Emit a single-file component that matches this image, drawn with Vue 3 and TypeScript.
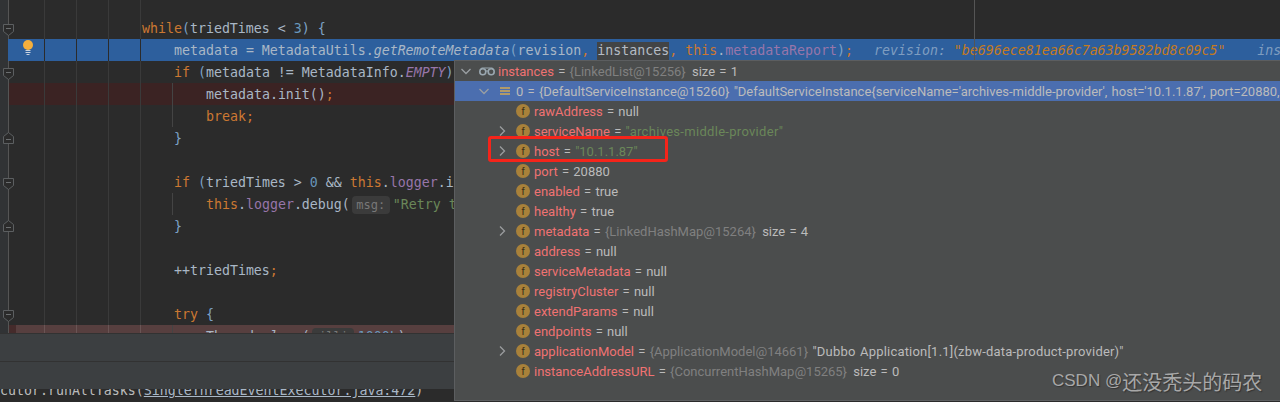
<script setup lang="ts">
type Seg = [string, string?]
interface Line { segs: Seg[]; lvl?: number; kind?: string; guide?: boolean; fold?: 'down' | 'up'; bulb?: boolean }
const lines: Line[] = [
  { segs: [], kind: 'top' },
  { lvl: 0, fold: 'down', segs: [['while', 'k'], ['(', 'b'], ['triedTimes < '], ['3', 'n'], [')', 'b'], [' '], ['{', 'b']] },
  { lvl: 1, kind: 'cur', bulb: true, segs: [['metadata = MetadataUtils.'], ['getRemoteMetadata', 'i'], ['(', 'b'], ['revision'], [',', 'k'], [' '], ['instances', 'hl'], [',', 'k'], [' '], ['this', 'k'], ['.'], ['metadataReport', 'f'], [')', 'b'], [';', 'k'], ['  revision: ', 'dbg d1'], ['"be696ece81ea66c7a63b9582bd8c09c5"', 'dbgs'], ['    ins', 'dbg']] },
  { lvl: 1, fold: 'down', segs: [['if', 'k'], [' '], ['(', 'b'], ['metadata != MetadataInfo.'], ['EMPTY', 'f i'], [')', 'b'], [' '], ['{', 'b']] },
  { lvl: 2, kind: 'red', guide: true, segs: [['metadata.init()'], [';', 'k']] },
  { lvl: 2, guide: true, segs: [['break', 'k'], [';', 'k']] },
  { lvl: 1, fold: 'up', segs: [['}', 'b']] },
  { segs: [] },
  { lvl: 1, fold: 'down', segs: [['if', 'k'], [' '], ['(', 'b'], ['triedTimes > '], ['0', 'n'], [' && '], ['this', 'k'], ['.'], ['logger', 'f'], ['.isDebugEnabled()']] },
  { lvl: 2, guide: true, segs: [['this', 'k'], ['.'], ['logger', 'f'], ['.debug('], ['msg:', 'hint h1'], ['"Retry to get metadata"', 's']] },
  { lvl: 1, fold: 'up', segs: [['}', 'b']] },
  { segs: [] },
  { lvl: 1, segs: [['++triedTimes'], [';', 'k']] },
  { segs: [] },
  { lvl: 1, fold: 'down', segs: [['try', 'k'], [' '], ['{', 'b']] },
  { lvl: 2, kind: 'pink', guide: true, segs: [['Thread.'], ['sleep', 'i'], ['('], ['millis:', 'hint h2'], ['1000L', 'n'], [')'], [';', 'k']] },
]

interface Node { lvl: number; chev?: 'r' | 'd'; icon: 'f' | 'w' | 's'; name: string; rest: Seg[]; sel?: boolean }
const f = (name: string, rest: Seg[], chev?: 'r'): Node => ({ lvl: 2, icon: 'f', name, rest, chev })
const nodes: Node[] = [
  { lvl: 0, chev: 'd', icon: 'w', name: 'instances', rest: [[' = '], ['{LinkedList@15256}', 'ref'], [' size = 1', 'gap']] },
  { lvl: 1, chev: 'd', icon: 's', sel: true, name: '0', rest: [[" = {DefaultServiceInstance@15260} \"DefaultServiceInstance{serviceName='archives-middle-provider', host='10.1.1.87', port=20880, enabled=true"]] },
  f('rawAddress', [[' = null']]),
  f('serviceName', [[' = '], ['"archives-middle-provider"', 'str wide']], 'r'),
  f('host', [[' = '], ['"10.1.1.87"', 'str']], 'r'),
  f('port', [[' = 20880']]),
  f('enabled', [[' = true']]),
  f('healthy', [[' = true']]),
  f('metadata', [[' = '], ['{LinkedHashMap@15264}', 'ref'], [' size = 4', 'gap']], 'r'),
  f('address', [[' = null']]),
  f('serviceMetadata', [[' = null']]),
  f('registryCluster', [[' = null']]),
  f('extendParams', [[' = null']]),
  f('endpoints', [[' = null']]),
  f('applicationModel', [[' = '], ['{ApplicationModel@14661}', 'ref'], [' "Dubbo Application[1.1](zbw-data-product-provider)"', 'wider']], 'r'),
  f('instanceAddressURL', [[' = '], ['{ConcurrentHashMap@15265}', 'ref'], [' size = 0', 'gap']]),
]
</script>

<template>
  <div class="page">
    <div class="editor">
      <div v-for="(l, i) in lines" :key="i" class="row" :class="l.kind">
        <div class="gut">
          <svg v-if="l.fold" class="fold" :class="l.fold" width="11" height="12" viewBox="0 0 11 12">
            <path d="M.5.5h10V7.5L5.5 11.5.5 7.5Z" fill="#2b2b2b" stroke="#5c5f61" />
            <path d="M3 4.5h5" stroke="#6b6e70" />
          </svg>
        </div>
        <div class="indent">
          <svg v-if="l.bulb" class="bulb" width="10" height="15" viewBox="0 0 10 15">
            <circle cx="5" cy="5" r="5" fill="#f4af3d" />
            <path d="M2.5 10.5h5M2.5 12.5h5M3.5 14.5h3" stroke="#c9d3e0" />
          </svg>
        </div>
        <div class="code" :class="{ guide: l.guide }" :style="{ paddingLeft: (l.lvl ?? 0) * 32 + 1 + 'px' }">
          <span v-for="(s, j) in l.segs" :key="j" :class="s[1]">{{ s[0] }}</span>
        </div>
      </div>
    </div>
    <div class="bar"></div>
    <div class="bar second"></div>
    <div class="console">
      <div class="con-line">cutor.runAllTasks(<span class="link">SingleThreadEventExecutor.java:472</span>)</div>
    </div>

    <div class="margin-line"></div>

    <div class="popup">
      <div v-for="n in nodes" :key="n.name" class="node" :class="{ sel: n.sel }" :style="{ paddingLeft: 5 + n.lvl * 18 + 'px' }">
        <span class="chev">
          <svg v-if="n.chev === 'r'" width="7" height="10" viewBox="0 0 7 10"><path d="M1 .5 5.5 5 1 9.5" fill="none" stroke="#9a9c9e" stroke-width="1.3" /></svg>
          <svg v-else-if="n.chev === 'd'" width="10" height="7" viewBox="0 0 10 7"><path d="M.5 1 5 5.5 9.5 1" fill="none" stroke="#9a9fa3" stroke-width="1.3" /></svg>
        </span>
        <span class="ico">
          <span v-if="n.icon === 'f'" class="fi">f</span>
          <svg v-else-if="n.icon === 'w'" class="wi" width="16" height="9" viewBox="0 0 16 9">
            <circle cx="3.8" cy="4.8" r="3" fill="none" stroke="#9aa7b0" stroke-width="1.6" />
            <circle cx="12.2" cy="4.8" r="3" fill="none" stroke="#9aa7b0" stroke-width="1.6" />
            <path d="M1 3 3 1h10l2 2M6.5 4h3" fill="none" stroke="#9aa7b0" stroke-width="1.2" />
          </svg>
          <span v-else class="si"><i></i><i></i><i></i></span>
        </span>
        <span class="name">{{ n.name }}</span><span v-for="(s, j) in n.rest" :key="j" :class="s[1]">{{ s[0] }}</span>
      </div>
    </div>

    <div class="redbox"></div>
    <div class="mark"><span class="lat">CSDN @</span><span class="cjk">还没秃头的码农</span></div>
  </div>
</template>

<style>
html, body { margin: 0; background: #2b2b2b; }
</style>

<style scoped>
.page { position: relative; width: 1280px; height: 402px; overflow: hidden; background: #2b2b2b; display: flex; flex-direction: column; font-family: "DejaVu Sans Mono", monospace; color: #a9b7c6; }
.editor { height: 333px; overflow: hidden; flex: none; }
.row { display: flex; height: 22px; --g: #3a3a3a; font-size: 13.28px; line-height: 24px; white-space: pre; }
.row.top { height: 17px; }
.gut { position: relative; width: 9px; box-sizing: border-box; flex: none; background: #313335; border-right: 1px solid #555; }
.fold { position: absolute; left: 3px; top: 7px; z-index: 1; }
.fold.up { transform: scaleY(-1); top: 5px; }
.indent { width: 132px; flex: none; display: flex; align-items: flex-start; padding: 1px 0 0 14px; box-sizing: border-box; background:
  linear-gradient(var(--g), var(--g)) 35px 0 / 1px 100% no-repeat,
  linear-gradient(var(--g), var(--g)) 67px 0 / 1px 100% no-repeat,
  linear-gradient(var(--g), var(--g)) 99px 0 / 1px 100% no-repeat,
  linear-gradient(var(--g), var(--g)) 131px 0 / 1px 100% no-repeat; }
.code { flex: 1; min-width: 0; height: 22px; }
.code.guide { background: linear-gradient(#444, #444) 31px 0 / 1px 100% no-repeat; }
.cur { background: #2d5f9d; --g: #2b2b2b; }
.cur .gut { border-right-color: #2d5f9d; background: #313335; }
.red { background: #3b2323; }
.pink { background: #573f3f; --g: #6a5555; }
.pink .indent { box-shadow: inset 7px 0 0 #452b2b; }
.k { color: #cc7832; }
.b { color: #7ea3c7; }
.n { color: #6897bb; }
.f { color: #9876aa; }
.s { color: #6a8759; }
.i { font-style: italic; }
.hl { background: #424445; color: #b4bcc4; padding: 1px 0 2px; }
.dbg { color: #7f9dc0; font-style: italic; }
.d1 { margin-left: 5px; }
.dbgs { color: #c47a1e; font-style: italic; }
.hint { display: inline-block; box-sizing: border-box; height: 18px; line-height: 18px; border-radius: 4px; background: #3b3b3b; color: #787878; font-size: 12px; text-align: center; margin: 0 3px 0 2px; }
.h1 { width: 38px; }
.h2 { width: 42px; margin-right: 4px; }
.bar { height: 27px; flex: none; background: #3c3f41; border-top: 1px solid #323232; }
.second { height: 27px; }
.console { flex: 1; overflow: hidden; background: #2b2b2b; font-size: 13.28px; }
.con-line { height: 22px; line-height: 22px; margin-top: -9px; white-space: pre; color: #bbb; }
.link { text-decoration: underline; color: #a9b7c6; }
.margin-line { position: absolute; left: 974px; top: 0; width: 1px; height: 60px; background: #555; }
.popup { position: absolute; left: 454px; top: 60px; width: 826px; height: 341px; box-sizing: border-box; border: 1px solid #5c5e60; border-right: 0; background: #4b4d4d; font-family: Roboto, sans-serif; font-size: 13px; word-spacing: 1px; color: #bbb; overflow: hidden; }
.node { display: flex; align-items: center; height: 20px; white-space: pre; }
.sel { background: #4b6eaf; }
.chev { width: 12px; flex: none; display: flex; justify-content: center; align-items: center; }
.ico { width: 26px; flex: none; display: flex; justify-content: flex-end; align-items: center; }
.fi { width: 14px; height: 14px; margin-right: 4px; border-radius: 50%; background: #a8813a; color: #3a2f1a; font: 11px/14px "Liberation Sans", sans-serif; text-align: center; word-spacing: 0; }
.wi { margin-right: 3px; }
.si { display: flex; flex-direction: column; gap: 1px; margin-right: 6px; }
.si i { display: block; width: 10px; height: 2px; background: #b09a6a; }
.name { color: #f07272; }
.sel .name { color: #bbb; }
.ref { color: #808080; }
.str { color: #6a8759; }
.wide { letter-spacing: .3px; }
.wider { letter-spacing: .2px; }
.gap { margin-left: 2px; }
.redbox { position: absolute; left: 488px; top: 136px; width: 180px; height: 26px; box-sizing: border-box; border: 3px solid #f5241a; border-radius: 3px; }
.mark { position: absolute; left: 1052px; top: 368px; height: 26px; display: flex; align-items: center; color: #a8a8a8; text-shadow: 1px 1px 1px #333; white-space: pre; }
.lat { font: 17px "Liberation Sans", sans-serif; }
.cjk { font: 20px "Noto Sans CJK SC", sans-serif; }
</style>
